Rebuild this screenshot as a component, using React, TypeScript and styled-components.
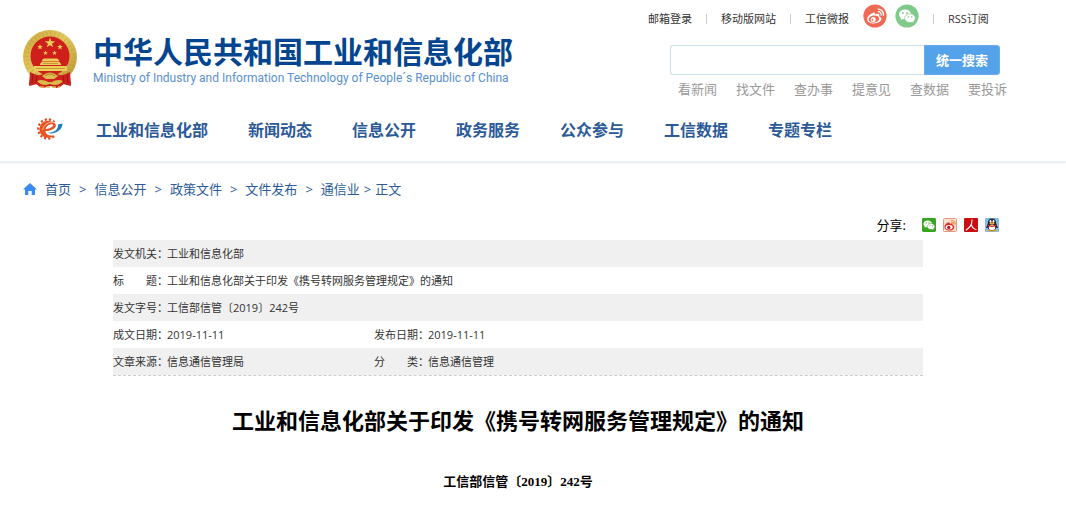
import React from "react";
import styled, { createGlobalStyle } from "styled-components";

const GlobalStyle = createGlobalStyle`
  * { box-sizing: border-box; }
  body {
    margin: 0;
    background: #fff;
    color: #333;
    font-family: "Open Sans", "Noto Sans CJK SC", sans-serif;
    font-size: 11px;
  }
  a { color: inherit; text-decoration: none; }
`;

const Header = styled.header`
  border-bottom: 2px solid #eaf0f5;
  box-shadow: 0 1px 3px #f0f5f9;
`;

const HeaderTop = styled.div`
  display: flex;
  justify-content: space-between;
  padding: 4px 60px 0 23px;
`;

const Brand = styled.a`
  display: flex;
  gap: 16px;
  padding-top: 26px;
`;

const BrandText = styled.div`
  white-space: nowrap;
`;

const BrandName = styled.div`
  font-family: "Noto Sans CJK SC", sans-serif;
  font-size: 30px;
  line-height: 40px;
  font-weight: 700;
  color: #04458f;
`;

const BrandEnglish = styled.div`
  font-family: Roboto, sans-serif;
  font-size: 12px;
  line-height: 16px;
  color: #5a8fce;
`;

const Tools = styled.div`
  display: flex;
  flex-direction: column;
  width: 358px;
`;

const TopLinks = styled.nav`
  display: flex;
  align-items: flex-end;
  gap: 14px;
  height: 24px;
  line-height: 18px;
  white-space: nowrap;
`;

const Divider = styled.span`
  width: 1px;
  height: 10px;
  margin-bottom: 4px;
  background: #ccc;
`;

const SocialLinks = styled.span`
  display: flex;
  gap: 8px;
  svg { display: block; }
`;

const SearchForm = styled.form`
  display: flex;
  width: 330px;
  height: 30px;
  margin: 17px 0 0 22px;
`;

const SearchInput = styled.input`
  flex: 1;
  min-width: 0;
  padding: 0 8px;
  border: 1px solid #cfdfe9;
  border-right: 0;
  border-radius: 3px 0 0 3px;
  background: #fff;
  outline: none;
`;

const SearchButton = styled.button`
  width: 76px;
  padding: 0;
  border: 1px solid #69aeec;
  border-radius: 0 3px 3px 0;
  background: #54a3ea;
  color: #fff;
  font: 700 13px/18px "Noto Sans CJK SC", sans-serif;
`;

const QuickLinks = styled.nav`
  display: flex;
  gap: 19px;
  margin: 4px 0 0 30px;
  font-size: 13px;
  line-height: 20px;
  color: #999;
  white-space: nowrap;
`;

const MainNav = styled.nav`
  display: flex;
  align-items: center;
  gap: 40px;
  height: 62px;
  padding: 0 0 2px 36px;
  font-size: 16px;
  font-weight: 700;
  color: #2b5a99;
  white-space: nowrap;
`;

const NavLogo = styled.a`
  display: block;
  width: 20px;
  svg { display: block; }
`;

const Page = styled.main`
  padding: 0 53px 24px 23px;
`;

const Breadcrumb = styled.nav`
  display: flex;
  align-items: center;
  gap: 8px;
  padding-top: 16px;
  font-size: 13px;
  line-height: 20px;
  color: #2b5a99;
  white-space: nowrap;
  svg { display: block; }
`;

const LastCrumb = styled.span`
  display: flex;
  gap: 4px;
`;

const Share = styled.div`
  display: flex;
  justify-content: flex-end;
  align-items: center;
  gap: 7px;
  padding: 16px 14px 5px 0;
  font-size: 13px;
  line-height: 20px;
  color: #000;
  svg { display: block; }
`;

const ShareLabel = styled.span`
  margin-right: 9px;
`;

const Sheet = styled.div`
  padding: 0 90px;
`;

const InfoTable = styled.table`
  width: 100%;
  border-spacing: 0;
  table-layout: fixed;
  border-bottom: 1px dashed #ccc;
  line-height: 18px;
`;

const InfoRow = styled.tr<{ $shaded?: boolean }>`
  height: 27px;
  background: ${(p) => (p.$shaded ? "#f0f0f0" : "#fff")};
`;

const InfoLabel = styled.th`
  padding: 0;
  font-weight: 400;
  text-align: left;
  white-space: pre;
`;

const InfoValue = styled.td`
  padding: 0;
`;

const Title = styled.h1`
  margin: 28px 0 0;
  font-size: 22px;
  line-height: 32px;
  font-weight: 700;
  color: #000;
  text-align: center;
`;

const DocumentNumber = styled.p`
  margin: 36px 0 0;
  font-family: "Liberation Serif", "Noto Sans CJK SC", serif;
  font-size: 13px;
  line-height: 20px;
  font-weight: 700;
  color: #000;
  text-align: center;
`;

const star = (cx: number, cy: number, r: number) =>
  Array.from({ length: 10 }, (_, i) => {
    const a = (-90 + i * 36) * (Math.PI / 180);
    const d = i % 2 ? r * 0.4 : r;
    return `${(cx + d * Math.cos(a)).toFixed(2)},${(cy + d * Math.sin(a)).toFixed(2)}`;
  }).join(" ");

const Emblem = () => (
  <svg width="54" height="58" viewBox="0 0 54 58" aria-hidden="true">
    <defs>
      <linearGradient id="gold" x1="0" y1="0" x2="1" y2="1">
        <stop offset="0" stopColor="#c9a43a" />
        <stop offset=".45" stopColor="#e3c860" />
        <stop offset="1" stopColor="#b8902c" />
      </linearGradient>
    </defs>
    <path d="M8 42 L6 56 L14 54 L20 58 L27 56 L34 58 L40 54 L48 56 L46 42Z" fill="#c41f1c" />
    <circle cx="27" cy="27" r="27" fill="url(#gold)" />
    <circle cx="27" cy="27" r="23" fill="none" stroke="#a88228" strokeWidth="5" strokeDasharray="1 3" opacity=".25" />
    <circle cx="27" cy="26" r="19.5" fill="#cf1f1b" />
    <g fill="#edce58">
      <polygon points={star(27, 13, 5.4)} />
      <polygon points={star(17, 17, 3)} />
      <polygon points={star(37, 17, 3)} />
      <polygon points={star(22.5, 23, 2.6)} />
      <polygon points={star(31.5, 23, 2.6)} />
      <path d="M19 30 L21 28.5 H34 L36 30 V31 H19Z M17 34 L19 31.5 H36 L38 34V35H17Z M11 36H44V41H11Z" />
    </g>
    <path d="M13 38.5H42M20 33.5H35" stroke="#b88e2f" strokeWidth=".8" />
    <path d="M7 42 Q15 47 20 44 Q27 38 34 44 Q39 47 47 42 L48 55 L42 53 L37 57 L31 52 H23 L17 57 L12 53 L6 55Z" fill="#cc211d" />
    <path d="M19 46 Q27 39 35 46 L31 49 H23Z" fill="#ddbd50" />
    <path d="M22 46 Q27 42 32 46" fill="none" stroke="#a98126" />
    <path d="M14 51 Q20 48 27 53 Q34 48 40 51 Q35 57 27 54 Q19 57 14 51Z" fill="#ddb949" />
    <path d="M10 44 L9 53 M14 46 L13 52 M40 46 L41 52 M44 44 L45 53" stroke="#951713" />
    <path d="M17 57 H37" stroke="#d9b346" strokeWidth="1.5" strokeDasharray="4 2" />
  </svg>
);

const WeiboShape = ({ ink, hole }: { ink: string; hole: string }) => (
  <>
    <path d="M10.3 8.7C7.5 9.5 4.2 12.3 4.2 15C4.2 17.8 7.2 19.5 10.8 19.5C15.3 19.5 18.4 17.2 18.4 14.8C18.4 13.4 17.2 12.7 16.2 12.4C16.6 11.1 16.5 10.2 15.5 9.8C14.5 9.5 13.2 9.9 12 10.4C12.5 8.9 11.7 8.3 10.3 8.7Z" fill={ink} />
    <ellipse cx="10.9" cy="15" rx="5.3" ry="3.5" fill={hole} transform="rotate(-8 10.9 15)" />
    <circle cx="10.2" cy="15.4" r="2.5" fill={ink} />
    <circle cx="9.5" cy="15.9" r=".9" fill={hole} />
    <path d="M15.4 7.7A2.8 2.8 0 0 1 18.1 11M15.2 5.1A5.3 5.3 0 0 1 20.4 11.4" fill="none" stroke={ink} strokeWidth="1.3" strokeLinecap="round" />
  </>
);

const WechatShape = ({ eye }: { eye: string }) => (
  <>
    <path d="M10 5.5C6.5 5.5 4 7.7 4 10.5C4 12 4.8 13.4 6 14.2L5.5 16.1L7.7 15C8.4 15.2 9.2 15.3 10 15.3C13.5 15.3 16.2 13.1 16.2 10.4C16.2 7.7 13.5 5.5 10 5.5Z" fill="#fff" />
    <path d="M15 9.8C12 9.8 9.6 11.7 9.6 14.2C9.6 16.7 12 18.6 15 18.6C15.7 18.6 16.4 18.5 17 18.3L18.8 19.3L18.4 17.6C19.6 16.8 20.3 15.6 20.3 14.2C20.3 11.7 18 9.8 15 9.8Z" fill="#fff" stroke={eye} strokeWidth=".7" />
    <g fill={eye}>
      <circle cx="8" cy="9" r=".9" /><circle cx="12" cy="9" r=".9" />
      <circle cx="13.3" cy="13" r=".8" /><circle cx="16.8" cy="13" r=".8" />
    </g>
  </>
);

const EGovLogo = () => (
  <svg width="27" height="22" viewBox="0 0 27 22" aria-hidden="true">
    <path d="M18.6 4.2A9.6 9.6 0 1 0 18.8 17.6" fill="none" stroke="#e04a24" strokeWidth="2.2" strokeDasharray="2.2 2" />
    <path d="M17.2 4.4A8.6 8.6 0 1 0 18.2 17.2C13.6 18.4 9.6 16.4 9.4 12.9C14.6 13.2 19.8 10.4 19.9 7.4C19.9 5.8 18.8 4.8 17.2 4.4Z" fill="#ea5420" />
    <path d="M9.6 11.2C10 8.4 13.4 6 16.2 6.3C18.6 6.8 15.8 10.8 9.6 11.2Z" fill="#fff" />
    <path d="M18.4 4.2C13 3.2 7.2 7 6.8 11.8" fill="none" stroke="#fff" strokeWidth=".6" />
    <path d="M11.6 14.6C17.4 15.2 22.6 12 22 6.6L26.4 5.6C26.6 12 18.6 17.6 11.6 14.6Z" fill="#2079bd" />
  </svg>
);

const HomeIcon = () => (
  <svg width="14" height="12" viewBox="0 0 14 12" aria-hidden="true">
    <path d="M7 0 L14 6.5 H12 V12 H8.7 V8 H5.3 V12 H2 V6.5 H0Z" fill="#398bef" />
  </svg>
);

const WeiboCircle = () => (
  <svg width="24" height="24" viewBox="0 0 24 24"><circle cx="12" cy="12" r="11.6" fill="#ef6955" /><WeiboShape ink="#fff" hole="#ef6955" /></svg>
);

const WechatCircle = () => (
  <svg width="24" height="24" viewBox="0 0 24 24"><circle cx="12" cy="12" r="11.6" fill="#7fc98b" /><WechatShape eye="#7fc98b" /></svg>
);

const WechatTile = () => (
  <svg width="14" height="14" viewBox="2 2 20 20"><rect x="2" y="2" width="20" height="20" rx="2" fill="#36a51f" /><WechatShape eye="#36a51f" /></svg>
);

const WeiboTile = () => (
  <svg width="14" height="14" viewBox="0 0 14 14">
    <rect x=".5" y=".5" width="13" height="13" rx="1" fill="#fbe0cd" stroke="#dc9a83" />
    <path d="M5 4.6C3.4 5.2 1.4 7 1.4 9.1C1.4 11.3 3.6 12.6 6 12.6C9 12.6 11.3 11.2 11.3 9.2C11.3 8 10.4 7.5 9.7 7.3C10.1 5.7 8.6 5.2 6.9 6C7.1 4.8 6.4 4.2 5 4.6Z" fill="#d92b2b" />
    <ellipse cx="6.1" cy="9.3" rx="3.5" ry="2.2" fill="#fff" />
    <circle cx="5.8" cy="9.4" r="1.6" fill="#b5151c" />
    <path d="M8.2 4.2A2.2 2.2 0 0 1 10.6 6.4M8 2.2A4.2 4.2 0 0 1 12.3 6.8" fill="none" stroke="#ee8a3b" strokeWidth="1.1" />
  </svg>
);

const PeopleTile = () => (
  <svg width="14" height="14" viewBox="0 0 14 14">
    <rect width="14" height="14" rx="1" fill="#cb0d12" />
    <path d="M8 1.8C8.2 5.6 6.3 9.3 2.2 12M7.4 6.6C8 9 9.5 10.9 12 11.5" fill="none" stroke="#fff" strokeWidth="1.1" strokeLinecap="round" />
  </svg>
);

const QQTile = () => (
  <svg width="14" height="14" viewBox="0 0 14 14">
    <rect width="14" height="14" rx="1" fill="#84bde8" />
    <ellipse cx="4.6" cy="12.5" rx="2.6" ry="1.1" fill="#e9a126" /><ellipse cx="9.4" cy="12.5" rx="2.6" ry="1.1" fill="#e9a126" />
    <path d="M2.8 5.5C2.8 2.5 4.4.6 7 .6S11.2 2.5 11.2 5.5L13 10L11.2 9.7C10.6 11.6 9 12.3 7 12.3S3.4 11.6 2.8 9.7L1 10Z" fill="#20242b" />
    <ellipse cx="7" cy="9.4" rx="3.2" ry="2.7" fill="#fff" />
    <ellipse cx="5.5" cy="3.4" rx="1" ry="1.3" fill="#fff" /><ellipse cx="8.5" cy="3.4" rx="1" ry="1.3" fill="#fff" />
    <ellipse cx="7" cy="5.5" rx="2.6" ry=".9" fill="#f0ab29" />
    <path d="M2.6 6.6Q7 8.8 11.4 6.6V8.1Q7 10 2.6 8.1Z" fill="#d92721" />
  </svg>
);

const quickLinks = ["看新闻", "找文件", "查办事", "提意见", "查数据", "要投诉"];
const navItems = ["工业和信息化部", "新闻动态", "信息公开", "政务服务", "公众参与", "工信数据", "专题专栏"];
const crumbs = ["首页", "信息公开", "政策文件", "文件发布"];
const shares = [
  { name: "微信", Icon: WechatTile },
  { name: "新浪微博", Icon: WeiboTile },
  { name: "人民网", Icon: PeopleTile },
  { name: "QQ", Icon: QQTile },
];
const info = [
  [["发文机关：", "工业和信息化部"]],
  [["标　　题：", "工业和信息化部关于印发《携号转网服务管理规定》的通知"]],
  [["发文字号：", "工信部信管〔2019〕242号"]],
  [["成文日期：", "2019-11-11"], ["发布日期：", "2019-11-11"]],
  [["文章来源：", "信息通信管理局"], ["分　　类：", "信息通信管理"]],
];

export default function App() {
  return (
    <>
      <GlobalStyle />
      <Header>
        <HeaderTop>
          <Brand href="#">
            <Emblem />
            <BrandText>
              <BrandName>中华人民共和国工业和信息化部</BrandName>
              <BrandEnglish>Ministry of Industry and Information Technology of People´s Republic of China</BrandEnglish>
            </BrandText>
          </Brand>
          <Tools>
            <TopLinks>
              <a href="#">邮箱登录</a>
              <Divider />
              <a href="#">移动版网站</a>
              <Divider />
              <a href="#">工信微报</a>
              <SocialLinks>
                <a href="#" aria-label="微博"><WeiboCircle /></a>
                <a href="#" aria-label="微信"><WechatCircle /></a>
              </SocialLinks>
              <Divider />
              <a href="#">RSS订阅</a>
            </TopLinks>
            <SearchForm onSubmit={(e) => e.preventDefault()}>
              <SearchInput type="text" aria-label="搜索" />
              <SearchButton type="submit">统一搜索</SearchButton>
            </SearchForm>
            <QuickLinks>
              {quickLinks.map((t) => <a href="#" key={t}>{t}</a>)}
            </QuickLinks>
          </Tools>
        </HeaderTop>
        <MainNav>
          <NavLogo href="#" aria-label="政务"><EGovLogo /></NavLogo>
          {navItems.map((t) => <a href="#" key={t}>{t}</a>)}
        </MainNav>
      </Header>
      <Page>
        <Breadcrumb>
          <HomeIcon />
          {crumbs.map((t) => (
            <React.Fragment key={t}>
              <a href="#">{t}</a>
              <span>&gt;</span>
            </React.Fragment>
          ))}
          <LastCrumb>
            <a href="#">通信业</a>
            <span>&gt;</span>
            <span>正文</span>
          </LastCrumb>
        </Breadcrumb>
        <Share>
          <ShareLabel>分享:</ShareLabel>
          {shares.map(({ name, Icon }) => <a href="#" aria-label={name} key={name}><Icon /></a>)}
        </Share>
        <Sheet>
          <InfoTable>
            <colgroup>
              <col style={{ width: 54 }} />
              <col style={{ width: 207 }} />
              <col style={{ width: 54 }} />
              <col />
            </colgroup>
            <tbody>
              {info.map((cells, i) => (
                <InfoRow $shaded={i % 2 === 0} key={cells[0][0]}>
                  {cells.map(([label, value]) => (
                    <React.Fragment key={label}>
                      <InfoLabel scope="row">{label}</InfoLabel>
                      <InfoValue colSpan={cells.length === 1 ? 3 : 1}>{value}</InfoValue>
                    </React.Fragment>
                  ))}
                </InfoRow>
              ))}
            </tbody>
          </InfoTable>
        </Sheet>
        <Title>工业和信息化部关于印发《携号转网服务管理规定》的通知</Title>
        <DocumentNumber>工信部信管〔2019〕242号</DocumentNumber>
      </Page>
    </>
  );
}
